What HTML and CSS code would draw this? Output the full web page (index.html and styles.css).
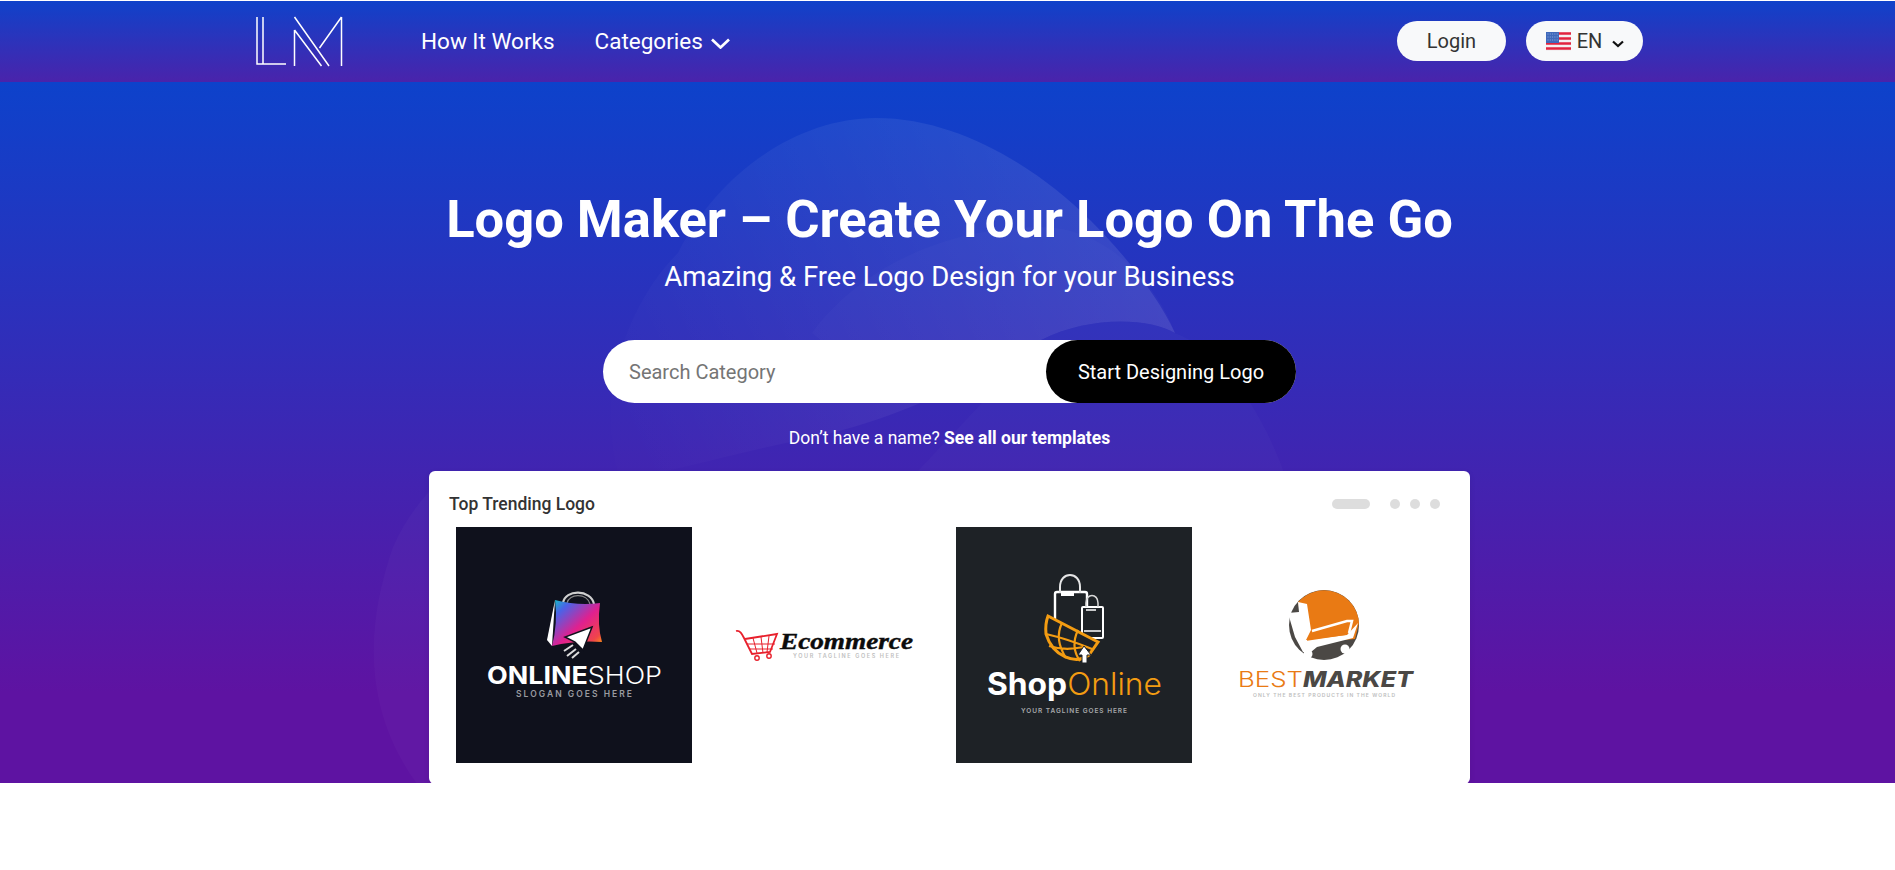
FILE: index.html
```html
<!DOCTYPE html>
<html lang="en">
<head>
  <meta charset="UTF-8" />
  <meta name="viewport" content="width=device-width, initial-scale=1.0" />
  <title>Logo Maker</title>
  <link rel="stylesheet" href="styles.css">
</head>
<body>
  <header class="topbar">
    <div class="topbar-inner">
      <a class="brand" href="#">
        <svg width="90" height="52" viewBox="0 0 90 52" fill="none" stroke="#fff" stroke-width="1.500">
          <path d="M1 1V48H30M7 1V48" />
          <path d="M38.500 14V50M38.500 14L65.500 50M38.500 1L73 50M85.500 1V50M85.500 1L63.500 32" />
        </svg>
      </a>
      <nav class="mainnav">
        <a href="#">How It Works</a>
        <a href="#">Categories
          <svg class="nav-chevron" width="19" height="11" viewBox="0 0 19 11" fill="none" stroke="#fff" stroke-width="2.700"><path d="M1 1.500L9.500 9.500L18 1.500" /></svg>
        </a>
      </nav>
      <div class="topbar-right">
        <a class="pill login" href="#">Login</a>
        <a class="pill lang" href="#">
          <svg width="25" height="19" viewBox="0 0 25 19">
            <rect width="25" height="19" fill="#f3f0f2" />
            <path d="M0 1.500H25M0 6.500H25M0 11.500H25M0 16.500H25" stroke="#e2233f" stroke-width="2.400" />
            <rect width="13" height="11" fill="#3f69bb" />
            <path d="M1.500 2H12M1.500 5H12M1.500 8H12" stroke="#8fa8dc" stroke-width="1" stroke-dasharray="1 1.300" />
          </svg>
          <span>EN</span>
          <svg class="lang-chevron" width="12" height="8" viewBox="0 0 12 8" fill="none" stroke="#111" stroke-width="2.200"><path d="M1 1.500L6 6L11 1.500" /></svg>
        </a>
      </div>
    </div>
  </header>

  <section class="hero">
    <svg class="hero-shapes" width="1895" height="701" viewBox="0 82 1895 701">
      <defs>
        <linearGradient id="petal" gradientUnits="userSpaceOnUse" x1="1150" y1="220" x2="640" y2="460">
          <stop offset="0" stop-color="#fff" stop-opacity=".1" />
          <stop offset="1" stop-color="#fff" stop-opacity=".005" />
        </linearGradient>
      </defs>
      <path fill="url(#petal)" d="M876 118C960 118 1040 170 1090 220C1130 260 1160 300 1175 333C1150 318 1090 315 1041 340C960 390 880 425 800 440C740 452 680 470 620 480C590 380 640 290 678 253C720 170 800 118 876 118Z" />
      <path fill="#fff" fill-opacity=".02" d="M812 333C850 280 930 227 1041 227C1110 227 1160 290 1175 333C1150 318 1090 315 1041 340C1000 360 900 410 812 333Z" />
      <path fill="#fff" fill-opacity=".018" d="M1041 340C1090 315 1150 318 1175 333C1220 350 1265 410 1290 490H900Z" />
      <path fill="#fff" fill-opacity=".022" d="M417 784C370 720 360 640 393 547C405 520 420 500 440 480H600V784Z" />
    </svg>

    <div class="hero-content">
      <h1>Logo Maker – Create Your Logo On The Go</h1>
      <p class="tagline">Amazing &amp; Free Logo Design for your Business</p>

      <form class="search">
        <input type="text" placeholder="Search Category" />
        <button type="submit">Start Designing Logo</button>
      </form>

      <p class="noname">Don’t have a name? <a href="#">See all our templates</a></p>

      <div class="trending">
        <div class="trending-head">
          <h2>Top Trending Logo</h2>
          <div class="slider-dots">
            <span class="dot-long"></span>
            <span class="dot"></span>
            <span class="dot"></span>
            <span class="dot"></span>
          </div>
        </div>
        <div class="logo-row">

          <svg class="logo" viewBox="0 0 236 236">
            <defs>
              <linearGradient id="bagfill" x1="0" y1="0" x2="1" y2="1">
                <stop offset="0" stop-color="#10c6c0" />
                <stop offset=".2" stop-color="#4a63e8" />
                <stop offset=".55" stop-color="#e0208f" />
                <stop offset=".85" stop-color="#f0454a" />
                <stop offset="1" stop-color="#fda20a" />
              </linearGradient>
            </defs>
            <rect width="236" height="236" fill="#0f111c" />
            <path d="M107 76C109 62 135 62 138 77" fill="none" stroke="#cfcfcf" stroke-width="2.200" />
            <path d="M111 76C113 66 131 66 134 77" fill="none" stroke="#8a8a8a" stroke-width="1.200" />
            <path d="M99 73L91 113L96 119Z" fill="#fff" />
            <path d="M99 73Q122 79 144 76Q141 98 146 115Q120 113 96 119Q102 96 99 73Z" fill="url(#bagfill)" />
            <path d="M136 100L109 110L119 115L127 123Z" fill="#fff" stroke="#0f111c" stroke-width="1.500" />
            <path d="M117 118L108 124M120 122L111 129M123 125L116 131" stroke="#ddd" stroke-width="2" />
            <text x="31" y="157" class="lg-sans lg-bold" font-size="24" fill="#fff" textLength="175" lengthAdjust="spacingAndGlyphs">ONLINE<tspan class="lg-light">SHOP</tspan></text>
            <text x="60" y="170" class="lg-sans lg-semi" font-size="8.500" fill="#9a9ba0" textLength="116">SLOGAN GOES HERE</text>
          </svg>

          <svg class="logo" viewBox="0 0 236 236">
            <path d="M30 104C34 103 36 107 38 111L46 127L64 125L71 107L39 112" fill="none" stroke="#e8202c" stroke-width="1.800" />
            <path d="M41 117H69M43 122H67M47 111L51 126M55 110L57 126M63 109L61 125" fill="none" stroke="#e8202c" stroke-width="1" />
            <circle cx="51" cy="131" r="2.200" fill="#fff" stroke="#e8202c" stroke-width="1.400" />
            <circle cx="63" cy="129" r="2.200" fill="#fff" stroke="#e8202c" stroke-width="1.400" />
            <text x="74" y="122" class="lg-serif" font-size="23" fill="#0c0c0c" stroke="#0c0c0c" stroke-width=".4" textLength="133" lengthAdjust="spacingAndGlyphs">Ecommerce</text>
            <text x="87" y="131" class="lg-sans lg-semi" font-size="5.500" fill="#c0c0c0" textLength="106">YOUR TAGLINE GOES HERE</text>
          </svg>

          <svg class="logo" viewBox="0 0 236 236">
            <rect width="236" height="236" fill="#1e2226" />
            <path d="M99 94V67Q99 65 101 65H129Q131 65 131 67V80" fill="none" stroke="#fff" stroke-width="2.400" />
            <path d="M104 66V60C104 44 124 44 124 60V66" fill="none" stroke="#e6e6e6" stroke-width="2" />
            <rect x="105" y="66" width="13" height="3" fill="#fff" />
            <rect x="126" y="80" width="21" height="31" rx="1" fill="#1e2226" stroke="#fff" stroke-width="2" />
            <path d="M130 80V76C130 66 142 66 142 76V80" fill="none" stroke="#d8d8d8" stroke-width="1.500" />
            <path d="M130 83H140M128 104H145" stroke="#fff" stroke-width="1.500" />
            <path d="M92 89L142 115L133 128C120 138 97 130 90 107Q89 97 92 89Z" fill="#1e2226" stroke="#f39c12" stroke-width="3" />
            <path d="M106 96Q98 112 110 131M122 103Q114 120 124 134M90 107Q112 112 136 122M93 119Q108 124 128 120" fill="none" stroke="#f39c12" stroke-width="2.200" />
            <path d="M128 119L135 128L131 128V136H126V128L122 128Z" fill="#fff" stroke="#1e2226" stroke-width="1" />
            <text x="31" y="168" class="lg-sans lg-bold" font-size="31" fill="#fff" textLength="175" lengthAdjust="spacingAndGlyphs">Shop<tspan class="lg-light" fill="#f39c12">Online</tspan></text>
            <text x="65" y="186" class="lg-sans lg-semi" font-size="6.500" fill="#a6a8aa" textLength="106">YOUR TAGLINE GOES HERE</text>
          </svg>

          <svg class="logo" viewBox="0 0 236 236">
            <circle cx="118" cy="98" r="35" fill="#4b4845" />
            <path d="M92 75A35 35 0 0 1 153 96L149 112L100 116Z" fill="#e97a14" />
            <path d="M82 86L93 85L92 75L101 77L105 103L100 113L141 108L152 96L147 111L111 120L105 125L97 125L89 110Z" fill="#fff" />
            <path d="M106 104L141 94L146 94L143 106" fill="none" stroke="#fff" stroke-width="2.500" />
            <path d="M101 113L141 107" stroke="#e97a14" stroke-width="1.500" />
            <circle cx="102" cy="127" r="4.500" fill="#fff" />
            <circle cx="139" cy="122" r="4.500" fill="#fff" />
            <text x="32" y="160" class="lg-sans lg-light" font-size="21" fill="#e97a14" textLength="65" lengthAdjust="spacingAndGlyphs">BEST</text>
            <text x="97" y="160" class="lg-sans lg-heavy" font-size="21" fill="#4b4845" textLength="110" lengthAdjust="spacingAndGlyphs">MARKET</text>
            <text x="47" y="170" class="lg-sans lg-semi" font-size="5" fill="#bdbdbd" textLength="142">ONLY THE BEST PRODUCTS IN THE WORLD</text>
          </svg>

        </div>
      </div>
    </div>
  </section>
</body>
</html>
```

FILE: styles.css
```css
* { box-sizing: border-box; }
body { margin: 0; padding-top: 1px; font-family: Roboto, "Liberation Sans", sans-serif; background: #fff; color: #333; }
a { color: inherit; text-decoration: none; }

.topbar { height: 81px; padding-left: 4px; background: linear-gradient(180deg, #0f42ca 0%, #4a23ab 100%); }
.topbar-inner { width: 1387px; height: 100%; margin: 0 auto; display: flex; align-items: center; }
.brand { display: flex; width: 165px; }
.mainnav { display: flex; gap: 40px; margin-bottom: 2px; color: #fff; font-size: 22.500px; }
.mainnav a { display: flex; align-items: center; gap: 8px; white-space: nowrap; }
.nav-chevron { margin-top: 5px; }
.topbar-right { margin: 0 0 1px auto; display: flex; gap: 20px; }
.pill { height: 40px; border-radius: 20px; background: #f8f9fa; color: #333; font-size: 20px; display: flex; align-items: center; justify-content: center; }
.login { width: 109px; }
.lang { width: 117px; gap: 6px; padding-left: 1px; }
.lang span { margin-right: 4px; }
.lang-chevron { margin-top: 5px; }

.hero { position: relative; height: 701px; padding-left: 4px; background: linear-gradient(180deg, #0d42cb 0%, #5e13a2 87%); }
.hero-shapes { position: absolute; top: 0; left: 0; }
.hero-content { position: relative; display: flex; flex-direction: column; align-items: center; padding-top: 103px; }
h1 { margin: 0; color: #fff; font-size: 52.500px; line-height: 68px; font-weight: 700; }
.tagline { margin: 7px 0 0; color: #fff; font-size: 27.500px; line-height: 34px; }
.search { width: 693px; height: 63px; margin-top: 46px; display: flex; background: #fff; border-radius: 32px; }
.search input { flex: 1; min-width: 0; border: 0; outline: 0; background: transparent; padding: 0 26px; font: 20px Roboto, sans-serif; color: #333; }
.search input::placeholder { color: #757575; }
.search button { width: 250px; border: 0; border-radius: 32px; background: #000; color: #fff; font: 20px Roboto, sans-serif; }
.noname { margin: 24px 0 0; color: #fff; font-size: 17.500px; line-height: 22px; }
.noname a { font-weight: 700; }

.trending { width: 1041px; height: 313px; margin-top: 22px; padding: 0 28px 0 27px; background: #fff; border-radius: 6px; box-shadow: 0 2px 6px rgba(0,0,0,.08); }
.trending-head { height: 56px; margin-left: -7px; padding: 10px 2px 0 0; display: flex; align-items: center; justify-content: space-between; }
h2 { margin: 0; font-size: 17.500px; font-weight: 500; color: #333; }
.slider-dots { display: flex; align-items: center; gap: 10px; }
.dot-long { width: 38px; height: 10px; border-radius: 5px; background: #ddd; margin-right: 10px; }
.dot { width: 10px; height: 10px; border-radius: 50%; background: #ddd; }
.logo-row { display: grid; grid-template-columns: repeat(4, 236px); gap: 14px; }
.logo { display: block; width: 236px; height: 236px; }

.lg-sans { font-family: Inter, "Open Sans", sans-serif; }
.lg-serif { font-family: "Liberation Serif", serif; font-weight: 700; font-style: italic; }
.lg-bold { font-weight: 700; }
.lg-semi { font-weight: 600; }
.lg-light { font-weight: 300; }
.lg-heavy { font-weight: 800; font-style: italic; }
```
